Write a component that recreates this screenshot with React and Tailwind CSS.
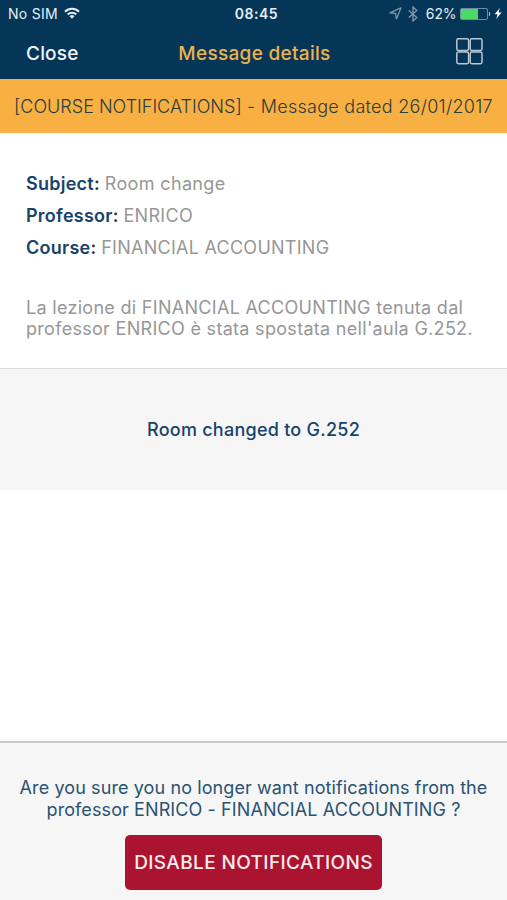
const DETAILS = [
  { label: "Subject", value: "Room change", spacing: "tracking-[0.36px]" },
  { label: "Professor", value: "ENRICO", spacing: "tracking-[0.3px]" },
  { label: "Course", value: "FINANCIAL ACCOUNTING", spacing: "tracking-[0.26px]" },
];

function WifiIcon() {
  return (
    <svg viewBox="0 0 16 12" className="mb-px h-3 w-4" fill="none" stroke="#e6eef5" strokeWidth="2">
      <path d="M1 4.7a9.9 9.9 0 0 1 14 0" />
      <path d="M3.7 7.5a6.1 6.1 0 0 1 8.6 0" />
      <path d="M8 11.8 5.6 9.3a3.4 3.4 0 0 1 4.8 0Z" fill="#e6eef5" stroke="none" />
    </svg>
  );
}

function LocationIcon() {
  return (
    <svg viewBox="0 0 13 13" className="h-[13px] w-[13px]" fill="none" stroke="#7f9ab0" strokeWidth="1.2">
      <path d="M12 .8 7.4 12 6.6 6.4 .9 5.9Z" strokeLinejoin="round" />
    </svg>
  );
}

function BluetoothIcon() {
  return (
    <svg viewBox="0 0 10 16" className="h-4 w-2.5" fill="none" stroke="#7f9ab0" strokeWidth="1.3">
      <path d="M.8 4.4 8.8 11.6 5 15V1L8.8 4.4.8 11.6" />
    </svg>
  );
}

function Battery() {
  return (
    <div className="flex items-center gap-px">
      <div className="h-3 w-7 rounded-[2px] border border-[#6d8da6]">
        <div className="h-full w-[17px] bg-[#4cd964]" />
      </div>
      <div className="h-1 w-[1.5px] rounded-r-full bg-[#c5d3de]" />
    </div>
  );
}

function StatusBar() {
  return (
    <div className="grid h-[27px] grid-cols-[1fr_auto_1fr] items-center pr-[5px] pl-2 text-[14px] text-[#e6eef5]">
      <div className="flex items-center gap-1.5">
        <span className="tracking-[0.3px]">No SIM</span>
        <WifiIcon />
      </div>
      <span className="pl-[3px] font-semibold tracking-[0.5px]">08:45</span>
      <div className="flex items-center justify-end">
        <LocationIcon />
        <span className="ml-1.5 flex">
          <BluetoothIcon />
        </span>
        <span className="mr-[3px] ml-2 tracking-[-0.1px]">62%</span>
        <Battery />
        <svg viewBox="0 0 8 11" className="ml-1 h-[11px] w-2" fill="#fff">
          <path d="M5.8 0 .6 6.3h3L2.2 11l5.4-6.5h-3Z" />
        </svg>
      </div>
    </div>
  );
}

function GridIcon() {
  return (
    <svg viewBox="0 0 27 27" className="h-[27px] w-[27px]" fill="none" stroke="#b9c8d5" strokeWidth="1.5">
      <rect x=".8" y=".8" width="11.8" height="11.6" rx="1.6" />
      <rect x="14.2" y=".8" width="11.8" height="11.6" rx="1.6" />
      <rect x=".8" y="14.1" width="11.8" height="11.6" rx="1.6" />
      <rect x="14.2" y="14.1" width="11.8" height="11.6" rx="1.6" />
    </svg>
  );
}

export default function App() {
  return (
    <div className="flex h-[900px] w-[507px] flex-col bg-white font-['Inter','Liberation_Sans',sans-serif]">
      <header className="h-[79px] shrink-0 bg-[#053658]">
        <StatusBar />
        <nav className="grid h-[52px] grid-cols-[1fr_auto_1fr] items-center pr-6 pl-[26px] font-medium">
          <button className="justify-self-start pt-0.5 text-[19px] tracking-[0.2px] text-[#eef5fa]">Close</button>
          <h1 className="pt-0.5 text-[19px] tracking-[0.3px] text-[#edb24c]">Message details</h1>
          <button className="justify-self-end pb-[3px]" aria-label="Menu">
            <GridIcon />
          </button>
        </nav>
      </header>

      <div className="flex h-[54px] shrink-0 items-center justify-center bg-[#f8b042] text-[18px] font-light whitespace-pre text-[#2a3c3e]">
        <span>[COURSE NOTIFICATIONS]</span>
        <span className="tracking-[0.27px]"> - Message dated 26/01/2017</span>
      </div>

      <section className="h-[235px] shrink-0 px-[26px] pt-[35px] text-[18px] text-[#979797]">
        {DETAILS.map(({ label, value, spacing }) => (
          <p key={label} className="h-8 leading-8">
            <b className="font-semibold tracking-[0.25px] text-[#17436a]">{label}</b>
            <span className="font-semibold text-[#333]">:</span>{" "}
            <span className={spacing}>{value}</span>
          </p>
        ))}
        <p className="mt-[33px] leading-[21px] tracking-[0.3px] whitespace-nowrap">
          La lezione di FINANCIAL ACCOUNTING tenuta dal
          <br />
          professor ENRICO è stata spostata nell'aula G.252.
        </p>
      </section>

      <div className="flex h-[122px] shrink-0 items-center justify-center border-t border-[#dcdcdc] bg-[#f6f6f6] text-[18px] font-medium tracking-[0.25px] text-[#17436a]">
        Room changed to G.252
      </div>

      <footer className="mt-auto flex h-[159px] flex-col items-center border-t-2 border-[#cbcbcb] bg-[#f6f6f6] pt-[34px]">
        <p className="text-center text-[18px] leading-[21.5px] tracking-[0.1px] whitespace-nowrap text-[#2a5273]">
          Are you sure you no longer want notifications from the
          <br />
          professor ENRICO - FINANCIAL ACCOUNTING ?
        </p>
        <button className="mt-[15px] h-[55px] w-[257px] rounded-[5px] bg-[#ab1430] pt-0.5 text-[19px] font-medium tracking-[0.38px] whitespace-nowrap text-[#fbeaee]">
          DISABLE NOTIFICATIONS
        </button>
      </footer>
    </div>
  );
}
